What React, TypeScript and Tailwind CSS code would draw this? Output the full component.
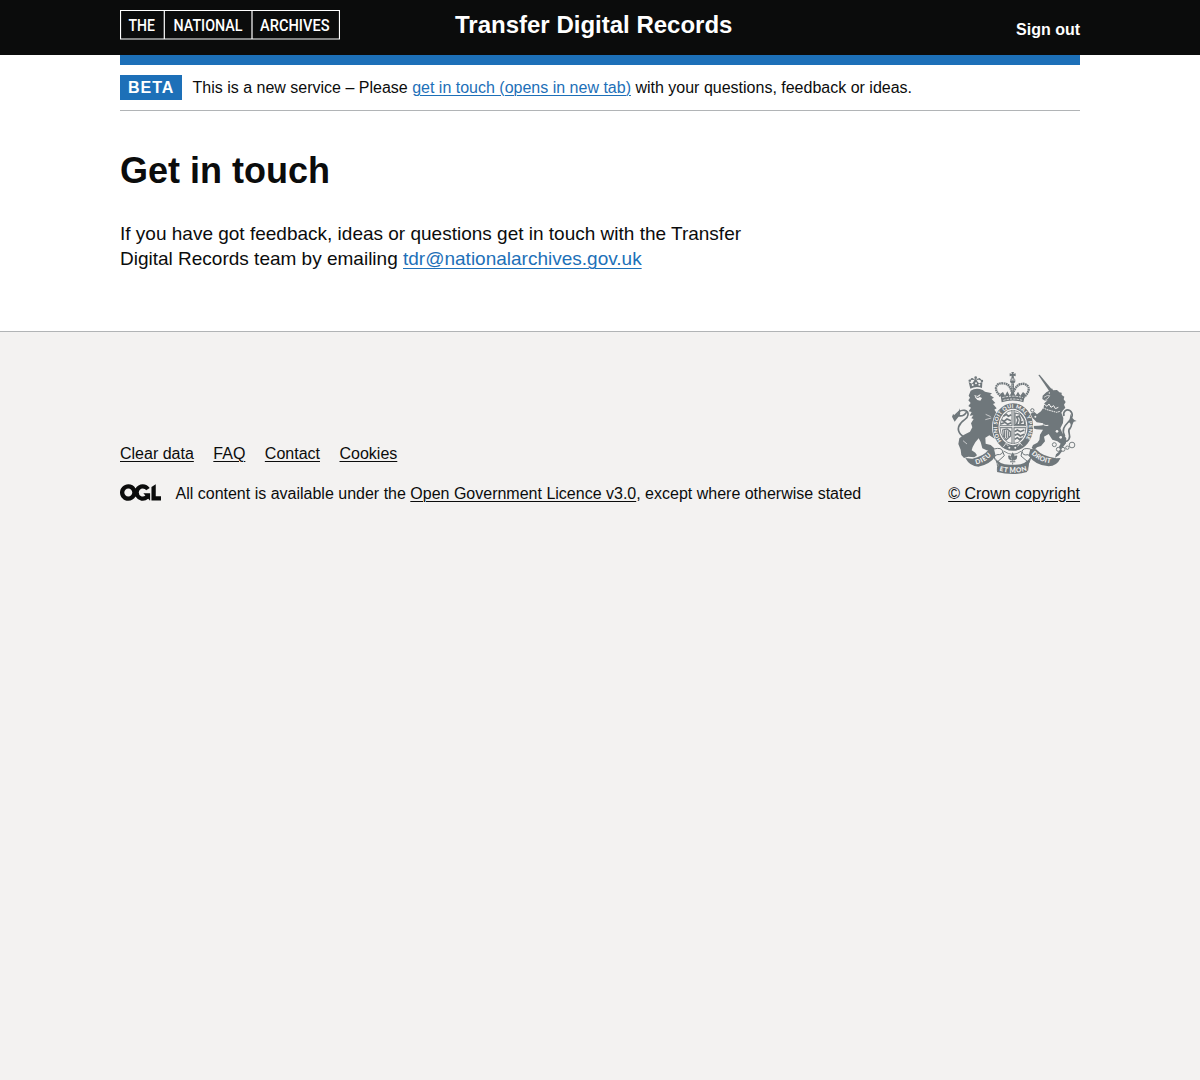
import React from "react";

const link = "underline decoration-1 underline-offset-2";

function ArchivesLogo() {
  return (
    <svg width="220" height="30" viewBox="0 0 220 30" className="block" role="img" aria-label="The National Archives">
      <path d="M.5 .5H219.5V29H.5ZM44.3 .5V29M132 .5V29" fill="none" stroke="#fff" strokeWidth="1.2" />
      <g fill="#fff" fontFamily="Roboto, sans-serif" fontWeight="500" fontSize="16.8">
        <text x="8.5" y="21" textLength="26.5" lengthAdjust="spacingAndGlyphs">THE</text>
        <text x="53.5" y="21" textLength="69" lengthAdjust="spacingAndGlyphs">NATIONAL</text>
        <text x="140" y="21" textLength="69.5" lengthAdjust="spacingAndGlyphs">ARCHIVES</text>
      </g>
    </svg>
  );
}

function OglLogo() {
  return (
    <svg width="41" height="17" viewBox="0 0 483.2 195.7" className="block shrink-0" fill="#0b0c0c" aria-hidden="true">
      <path d="M421.5 142.8V.1l-50.7 32.3v161.1h112.4v-50.7zm-122.3-9.6A47.12 47.12 0 0 1 221 97.8c0-26 21.1-47.1 47.1-47.1 16.7 0 31.4 8.7 39.7 21.8l42.7-27.2A97.63 97.63 0 0 0 268.1 0c-36.5 0-68.3 20.1-85.1 49.7A98 98 0 0 0 97.8 0C43.9 0 0 43.9 0 97.8s43.9 97.8 97.8 97.8c36.5 0 68.3-20.1 85.1-49.7a97.76 97.76 0 0 0 149.6 25.4l19.4 22.2h3v-87.8h-80l24.3 27.5zM97.8 145c-26 0-47.1-21.1-47.1-47.1s21.1-47.1 47.1-47.1 47.1 21.1 47.1 47.1S123.8 145 97.8 145" />
    </svg>
  );
}

const INK = "#6f777b";
const PAPER = "#f3f2f1";

function Crest() {
  return (
    <svg width="125" height="102" viewBox="12 12 375 306" className="block" fill={INK} aria-hidden="true">
      {/* lion */}
      <path d="M68 68Q84 58 104 66L111 71L132 76L126 81L138 89L131 93L142 105L135 108L146 121L139 125L150 140L146 190L140 212L124 202L112 209L113 227L128 231L139 241L134 249L116 247L103 241L98 222L92 211L82 223L74 237L71 247L82 254L87 262L79 268L61 266L48 270L40 261L38 245L31 228L34 211L48 200L66 191L73 178L69 166L77 153L70 151L76 142L65 143L71 132L62 130L69 119L61 114L68 105L61 97L66 89L62 83Z" />
      <path d="M79 81L88 84L98 78L94 86L102 90L97 98L88 96L82 89Z" fill={PAPER} />
      <path d="M82 83L89 87L97 83L93 89H86Z" />
      <path d="M67 62L62 42L72 47L82 33L93 46L103 42L102 60Q85 53 67 62Z" />
      <g fill={PAPER}><circle cx="74" cy="51" r="3" /><circle cx="84" cy="46" r="3" /><circle cx="94" cy="50" r="3" /></g>
      <path d="M65 40Q72 27 83 38Q95 27 102 41" fill="none" stroke={INK} strokeWidth="4" strokeDasharray="3.5 1" />
      <g><circle cx="65" cy="38" r="3.5" /><circle cx="72" cy="33" r="3" /><circle cx="83" cy="29" r="4" /><circle cx="94" cy="33" r="3" /><circle cx="102" cy="39" r="3.5" /></g>
      <path d="M113 139L128 146M112 155L130 150M45 218L57 228" stroke={PAPER} strokeWidth="2" />
      <path d="M20 148C25 132 39 125 50 127C66 132 61 148 50 155C31 168 25 184 38 199L48 208M32 143C43 145 51 140 55 133" fill="none" stroke={INK} strokeWidth="5" />
      <path d="M12 146L15 139L24 142Q33 135 34 121Q42 140 28 151L20 161Z" />

      {/* unicorn */}
      <path d="M271 21L275 20L313 66L306 73Z" />
      <path d="M303 68L312 61L315 67L327 66L334 73L341 74L341 81L349 86L347 94L353 102L348 110L352 119L345 127L340 134L346 150L345 165L337 181L343 195L355 211L354 226L345 237L343 249L333 262L321 269L324 259L332 252L331 240L338 227L328 220L313 215L302 198L288 206L291 220L279 234L267 238L259 246L251 240L255 231L268 224L274 216L276 200L285 185L265 184L255 181L250 188L243 181L254 174L273 173L284 172L286 166L266 163L257 153L247 147L247 137L259 132L267 139L279 130L287 118L289 106L299 97L291 98L283 93L284 83L295 73Z" />
      <path d="M288 88Q298 80 305 83L300 91L292 96" fill="none" stroke={PAPER} strokeWidth="2" />
      <circle cx="304" cy="75" r="2" fill={PAPER} />
      <path d="M288 108L297 115L303 108L309 118L317 113L322 122L331 118" fill="none" stroke={PAPER} strokeWidth="3" />
      <path d="M284 119L297 125L326 133L336 130" fill="none" stroke={PAPER} strokeWidth="3" strokeDasharray="5 2" />
      <g fill={PAPER}><circle cx="253" cy="127" r="5" stroke={INK} strokeWidth="3" /><circle cx="262" cy="146" r="3" /><circle cx="327" cy="190" r="4" /><circle cx="338" cy="208" r="4" /></g>
      <path d="M246 151L253 159L248 168M286 170Q294 174 301 172" stroke={PAPER} fill="none" strokeWidth="3" />
      <path d="M350 205C340 186 349 174 361 162C375 150 376 136 366 128C355 121 344 132 348 144M365 157Q375 170 367 180C354 189 371 199 363 213Q358 223 350 218" fill="none" stroke={INK} strokeWidth="5" />
      <path d="M368 137Q370 153 386 159L377 161L373 170L363 163Z" />
      <g fill={PAPER} stroke={INK} strokeWidth="2.8"><circle cx="319" cy="230" r="6" /><circle cx="331" cy="244" r="6" /><circle cx="345" cy="244" r="6" /><circle cx="358" cy="239" r="5" /><circle cx="372" cy="231" r="8.5" /></g>

      {/* crown */}
      <g fill="none" stroke={INK}>
        <path d="M158 84C134 64 144 44 164 46C185 46 188 62 194 78C201 59 211 44 230 48C251 56 241 77 228 87" strokeWidth="7" strokeDasharray="5 1.5" />
        <path d="M194 46V84" strokeWidth="8" />
        <path d="M194 50V84" stroke={PAPER} strokeWidth="2" strokeDasharray="3 3" />
      </g>
      <circle cx="194" cy="38" r="8" />
      <path d="M190 12H198L196 18L203 16V25L197 23L198 30H190L191 23L185 25V16L192 18Z" />
      <path d="M186 36H202M194 31V36" stroke={PAPER} strokeWidth="2" />
      <path d="M157 77L165 72L171 83L178 70L185 83L193 68L203 83L210 71L217 83L225 72L232 78L226 103Q194 92 161 103Z" />
      <path d="M163 89Q194 80 225 89M166 97Q194 89 223 97" fill="none" stroke={PAPER} strokeWidth="2.5" strokeDasharray="7 3" />

      {/* garter and shield */}
      <ellipse cx="195" cy="177" rx="63" ry="73" fill={PAPER} />
      <ellipse cx="195" cy="177" rx="52" ry="63" fill="none" stroke={INK} strokeWidth="17" />
      <ellipse cx="195" cy="177" rx="39" ry="50" fill={PAPER} stroke={INK} strokeWidth="2.5" />
      <g fill="none" stroke={INK} strokeWidth="5">
        <path d="M166 145L175 139L181 145L190 140M161 156L168 160L177 153L189 158M159 168L171 163L179 169L190 164" />
        <path d="M200 191L208 186L217 191L229 186M200 202L209 198L217 204L228 199M200 214L208 209L215 215L221 210" />
        <path d="M201 135L218 139L228 154L230 170H201Z" strokeWidth="3.5" />
        <path d="M206 169L210 156L206 147L214 144L218 154L216 166L224 160" />
        <path d="M164 186L177 183L188 191V204L175 216L166 204ZM170 187V207M176 187V211M182 190V207" strokeWidth="3.5" />
      </g>
      <path d="M195 127V227M156 176H234" stroke={INK} strokeWidth="9" />
      <path d="M195 127V227M156 176H234" stroke={PAPER} strokeWidth="3" />
      <defs>
        <path id="garter" d="M161 219A47.5 58.5 0 1 1 229 219" />
        <path id="dieu" d="M84 289Q113 284 134 258" />
        <path id="droit" d="M250 258Q272 282 311 286" />
        <path id="etmon" d="M154 308Q195 320 239 307" />
      </defs>
      <text fill={PAPER} fontFamily="Lato, sans-serif" fontWeight="900" fontSize="16">
        <textPath href="#garter" textLength="246" lengthAdjust="spacing">HONI SOIT QUI MAL Y PENSE</textPath>
      </text>
      <g fill={PAPER}><circle cx="184" cy="239" r="3" /><circle cx="202" cy="239" r="3" /></g>
      <path d="M166 237L174 226L181 234M209 235L216 225L223 233" stroke={PAPER} fill="none" strokeWidth="2.5" />

      {/* motto ribbon */}
      <path d="M52 270L73 272Q105 266 121 246L138 243L143 263Q128 288 91 296Q66 296 52 270Z" />
      <path d="M338 270L325 271Q284 266 264 244L247 243L242 263Q262 292 302 295Q326 295 338 270Z" />
      <path d="M139 267Q155 285 180 260L207 257Q233 286 247 266L237 290Q195 303 147 289Z" fill={PAPER} />
      <path d="M138 243Q161 237 164 250Q164 261 147 260Q135 264 140 273Q151 282 148 308M164 250L169 263L149 281M247 243Q224 238 222 251Q225 264 240 260Q252 264 247 274Q238 286 239 308M222 251L219 264L239 281" fill="none" stroke={INK} strokeWidth="3" />
      <path d="M139 267Q153 290 185 290H203Q233 290 248 267L237 312Q195 324 147 312L151 290Z" />
      <path d="M163 278Q175 269 179 258H208Q212 270 225 279Q195 295 163 278Z" fill={PAPER} />
      <path d="M194 253Q184 267 192 278H196Q205 267 194 253ZM180 263Q192 259 190 278L182 273ZM208 263Q197 259 198 278L206 273ZM186 280H202V283H186ZM192 284H196L194 291Z" />
      <path d="M167 249Q195 269 220 249" fill="none" stroke={INK} strokeWidth="2.5" />
      <g fill={PAPER} fontFamily="Lato, sans-serif" fontWeight="900" fontSize="20">
        <text><textPath href="#dieu" textLength="54">DIEU</textPath></text>
        <text><textPath href="#droit" textLength="65">DROIT</textPath></text>
        <text><textPath href="#etmon" textLength="84">ET MON</textPath></text>
      </g>
    </svg>
  );
}

export default function App() {
  return (
    <div className="flex min-h-screen flex-col bg-white font-['Liberation_Sans',Arial,sans-serif] text-base text-[#0b0c0c] antialiased">
      <header className="h-[55px] bg-[#0b0c0c] text-white">
        <div className="mx-auto flex w-[960px] items-start">
          <a href="#" className="mt-[10px] w-[335px]"><ArchivesLogo /></a>
          <a href="#" className="mt-[10px] text-2xl leading-[30px] font-bold">Transfer Digital Records</a>
          <a href="#" className="mt-[20px] ml-auto leading-5 font-bold">Sign out</a>
        </div>
      </header>
      <div className="mx-auto w-[960px]">
        <div className="h-[10px] bg-[#1d70b8]" />
        <div className="flex h-[46px] items-center border-b border-[#b1b4b6]">
          <strong className="mr-[10.5px] h-[25px] w-[62px] bg-[#1d70b8] pl-2 leading-[25px] tracking-[1px] text-white">BETA</strong>
          <span className="leading-5">This is a new service – Please <a href="#" className={`${link} text-[#1d70b8]`}>get in touch (opens in new tab)</a> with your questions, feedback or ideas.</span>
        </div>
        <main className="h-[220px] pt-10">
          <h1 className="text-[36px] leading-10 font-bold">Get in touch</h1>
          <p className="mt-[30px] w-[640px] text-[19px] leading-[25px]">
            If you have got feedback, ideas or questions get in touch with the Transfer Digital Records team by emailing <a href="#" className="text-[#1d70b8] underline decoration-1 underline-offset-[3px]">tdr@nationalarchives.gov.uk</a>
          </p>
        </main>
      </div>
      <footer className="flex-1 border-t border-[#b1b4b6] bg-[#f3f2f1]">
        <div className="mx-auto flex w-[960px] items-end justify-between pt-10">
          <div>
            <nav className="mb-5 flex gap-[19.5px] leading-5">
              <a href="#" className={link}>Clear data</a>
              <a href="#" className={link}>FAQ</a>
              <a href="#" className={link}>Contact</a>
              <a href="#" className={link}>Cookies</a>
            </nav>
            <div className="flex items-start gap-[14.5px] leading-5">
              <OglLogo />
              <span>All content is available under the <a href="#" className={link}>Open Government Licence v3.0</a>, except where otherwise stated</span>
            </div>
          </div>
          <div className="flex flex-col items-end">
            <div className="mr-[3px] mb-[10px]"><Crest /></div>
            <a href="#" className={`${link} leading-5`}>© Crown copyright</a>
          </div>
        </div>
      </footer>
    </div>
  );
}
